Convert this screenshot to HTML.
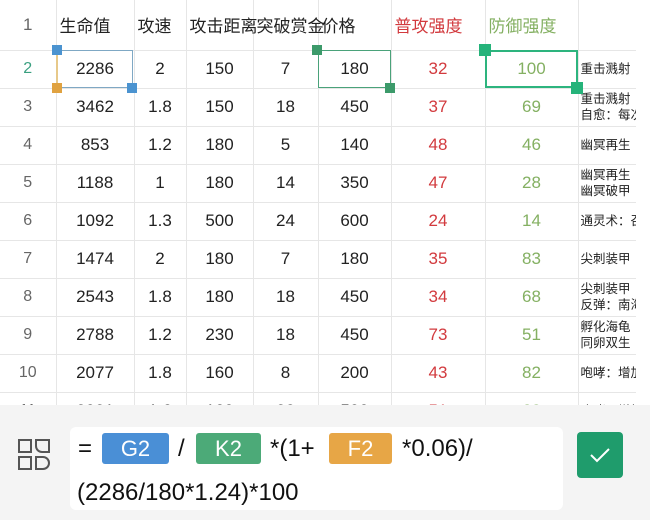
<!DOCTYPE html>
<html><head><meta charset="utf-8"><style>
*{margin:0;padding:0;box-sizing:border-box}
body{width:650px;height:520px;overflow:hidden;background:#fff;font-family:"Liberation Sans","Noto Sans CJK SC",sans-serif;position:relative}
table{position:absolute;left:0;top:0;border-collapse:collapse;table-layout:fixed;width:636px}
td{border-right:1px solid #e6e6e6;border-bottom:1px solid #e6e6e6;height:38px;text-align:center;font-size:17px;color:#222;white-space:nowrap;overflow:hidden;padding:0}
tr.h td{height:50px;font-size:17px;text-align:left;padding-left:3px}
tr.h td:first-child{text-align:center;padding:0}
td.n{color:#666;font-size:16px}
td.r{color:#d23a3e}
td.g{color:#84b062}
td.t{font-size:12.5px;text-align:left;padding-left:2px;line-height:16px;color:#222;border-right:none}
.sq{position:absolute;width:10px;height:10px}
.panel{position:absolute;left:0;top:405px;width:650px;height:115px;background:#f4f4f4}
.box{position:absolute;left:70px;top:427px;width:493px;height:83px;background:#fff;border-radius:6px}
.chip{position:absolute;top:433px;height:31px;border-radius:3px;color:#fff;font-size:22px;line-height:31px;text-align:center}
.f{position:absolute;font-size:24px;color:#111;line-height:31px;white-space:nowrap}
</style></head><body>
<table>
<colgroup><col style="width:56px"><col style="width:78px"><col style="width:52px"><col style="width:67px"><col style="width:65px"><col style="width:73px"><col style="width:94px"><col style="width:93px"><col style="width:58px"></colgroup>
<tr class="h"><td class="n">1</td><td>生命值</td><td>攻速</td><td style="overflow:visible">攻击距离</td><td style="overflow:visible">突破赏金</td><td>价格</td><td style="color:#d23a3e">普攻强度</td><td style="color:#84b062">防御强度</td><td class="t"></td></tr>
<tr><td class="n" style="color:#3aa080">2</td><td>2286</td><td>2</td><td>150</td><td>7</td><td>180</td><td class="r">32</td><td class="g">100</td><td class="t">重击溅射</td></tr>
<tr><td class="n">3</td><td>3462</td><td>1.8</td><td>150</td><td>18</td><td>450</td><td class="r">37</td><td class="g">69</td><td class="t">重击溅射<br>自愈：每次</td></tr>
<tr><td class="n">4</td><td>853</td><td>1.2</td><td>180</td><td>5</td><td>140</td><td class="r">48</td><td class="g">46</td><td class="t">幽冥再生</td></tr>
<tr><td class="n">5</td><td>1188</td><td>1</td><td>180</td><td>14</td><td>350</td><td class="r">47</td><td class="g">28</td><td class="t">幽冥再生<br>幽冥破甲</td></tr>
<tr><td class="n">6</td><td>1092</td><td>1.3</td><td>500</td><td>24</td><td>600</td><td class="r">24</td><td class="g">14</td><td class="t">通灵术：召</td></tr>
<tr><td class="n">7</td><td>1474</td><td>2</td><td>180</td><td>7</td><td>180</td><td class="r">35</td><td class="g">83</td><td class="t">尖刺装甲</td></tr>
<tr><td class="n">8</td><td>2543</td><td>1.8</td><td>180</td><td>18</td><td>450</td><td class="r">34</td><td class="g">68</td><td class="t">尖刺装甲<br>反弹：南海</td></tr>
<tr><td class="n">9</td><td>2788</td><td>1.2</td><td>230</td><td>18</td><td>450</td><td class="r">73</td><td class="g">51</td><td class="t">孵化海龟<br>同卵双生</td></tr>
<tr><td class="n">10</td><td>2077</td><td>1.8</td><td>160</td><td>8</td><td>200</td><td class="r">43</td><td class="g">82</td><td class="t">咆哮：增加</td></tr>
<tr><td class="n">11</td><td>2021</td><td>1.6</td><td>160</td><td>22</td><td>500</td><td class="r">51</td><td class="g">62</td><td class="t">咆哮：增加</td></tr>
</table>
<div style="position:absolute;left:57px;top:50px;width:76px;height:38px;border:1.5px solid #7fa8c4"></div>
<div style="position:absolute;left:56px;top:52px;width:2px;height:36px;background:#e7c98a"></div>
<div class="sq" style="left:52px;top:45px;background:#4b93d0"></div>
<div class="sq" style="left:52px;top:83px;background:#e0a240"></div>
<div class="sq" style="left:127px;top:83px;background:#4b93d0"></div>
<div style="position:absolute;left:318px;top:50px;width:73px;height:38px;border:1.5px solid #4aa27a"></div>
<div class="sq" style="left:312px;top:45px;background:#3c9a6a"></div>
<div class="sq" style="left:385px;top:83px;background:#3c9a6a"></div>
<div style="position:absolute;left:485px;top:50px;width:93px;height:38px;border:2px solid #2db47e"></div>
<div class="sq" style="left:479px;top:44px;width:12px;height:12px;background:#25b37a"></div>
<div class="sq" style="left:571px;top:82px;width:12px;height:12px;background:#25b37a"></div>
<div class="panel"></div>
<svg style="position:absolute;left:17px;top:438px" width="34" height="34" viewBox="0 0 34 34" fill="none" stroke="#555" stroke-width="2">
<rect x="2" y="2" width="12" height="12"/><path d="M19 2h13v12h-7a6 6 0 0 1-6-6z"/>
<rect x="2" y="19" width="12" height="12"/><path d="M19 19h7a6 6 0 0 1 0 12h-7z"/></svg>
<div class="box"></div>
<div class="f" style="left:78px;top:433px">=</div>
<div class="chip" style="left:102px;width:67px;background:#4a8fd6">G2</div>
<div class="f" style="left:178px;top:433px">/</div>
<div class="chip" style="left:196px;width:65px;background:#4caa78">K2</div>
<div class="f" style="left:270px;top:433px">*(1+</div>
<div class="chip" style="left:329px;width:63px;background:#e7a646">F2</div>
<div class="f" style="left:402px;top:433px">*0.06)/</div>
<div class="f" style="left:77px;top:477px">(2286/180*1.24)*100</div>
<div style="position:absolute;left:577px;top:432px;width:46px;height:46px;background:#1f9c6c;border-radius:4px"></div>
<svg style="position:absolute;left:588px;top:444px" width="24" height="22" viewBox="0 0 24 22"><path d="M3 11l6 6L21 5" fill="none" stroke="#fff" stroke-width="2"/></svg>
</body></html>
